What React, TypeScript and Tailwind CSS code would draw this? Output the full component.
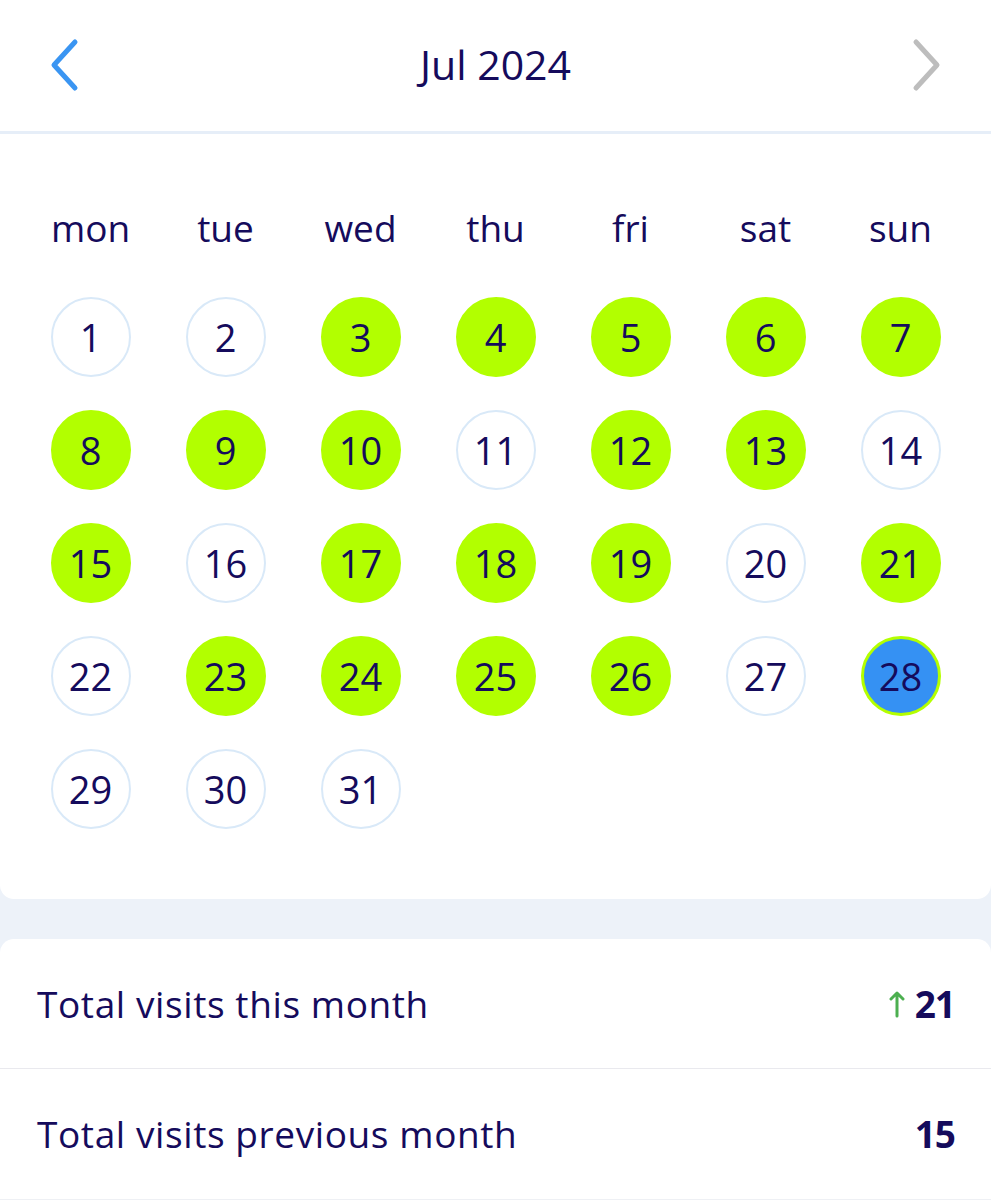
const WEEKDAYS = ["mon", "tue", "wed", "thu", "fri", "sat", "sun"];
const VISITED = new Set([3, 4, 5, 6, 7, 8, 9, 10, 12, 13, 15, 17, 18, 19, 21, 23, 24, 25, 26, 28]);
const TODAY = 28;

function Chevron({ dir, className }: { dir: "left" | "right"; className?: string }) {
  return (
    <svg width="32" height="54" viewBox="0 0 32 54" fill="none" className={className}>
      <path
        d={dir === "left" ? "M27 4 L6 27 L27 50" : "M5 4 L26 27 L5 50"}
        stroke="currentColor"
        strokeWidth="5"
        strokeLinecap="round"
        strokeLinejoin="round"
      />
    </svg>
  );
}

function UpArrow() {
  return (
    <svg width="16" height="28" viewBox="0 0 16 28" fill="none" className="text-[#4caf50]">
      <path d="M8 26 V3 M2 9 L8 3 L14 9" stroke="currentColor" strokeWidth="3" strokeLinecap="round" strokeLinejoin="round" />
    </svg>
  );
}

function Day({ n }: { n: number }) {
  const visited = VISITED.has(n);
  const today = n === TODAY;
  let cls = "border-2 border-[#d9e9f8] bg-white";
  if (today) cls = "border-[3px] border-[#b4ff00] bg-[#3591f3]";
  else if (visited) cls = "border-2 border-[#b2ff00] bg-[#b2ff00]";
  return (
    <div className="flex justify-center">
      <div className={`w-[80px] h-[80px] rounded-full flex items-center justify-center text-[38px] leading-none text-[#150b5c] ${cls}`}>
        {n}
      </div>
    </div>
  );
}

export default function App() {
  const days = Array.from({ length: 31 }, (_, i) => i + 1);
  return (
    <div className="min-h-[1200px] bg-[#edf2f9] text-[#150b5c]" style={{ fontFamily: "'Open Sans', Lato, sans-serif" }}>
      <header className="h-[134px] bg-white border-b-[3px] border-[#e6eef8] flex items-center justify-between px-[48px] pb-[2px]">
        <Chevron dir="left" className="text-[#3a95f2]" />
        <h1 className="text-[41px]">Jul 2024</h1>
        <Chevron dir="right" className="text-[#bdbdbd]" />
      </header>

      <section className="bg-white rounded-b-[14px] px-[23px] pt-[72px] pb-[70px]">
        <div className="grid grid-cols-7">
          {WEEKDAYS.map((d) => (
            <div key={d} className="text-center text-[37px] leading-[44px]">
              {d}
            </div>
          ))}
        </div>
        <div className="grid grid-cols-7 gap-y-[33px] mt-[47px]">
          {days.map((n) => (
            <Day key={n} n={n} />
          ))}
        </div>
      </section>

      <section className="mt-[40px] bg-white rounded-t-[14px]">
        <div className="h-[130px] flex items-center justify-between pl-[37px] pr-[36px] border-b border-[#e9e9ee]">
          <span className="text-[37px] tracking-[0.6px]">Total visits this month</span>
          <span className="flex items-center gap-[10px] text-[37px] font-bold tracking-[-1px]">
            <UpArrow />
            21
          </span>
        </div>
        <div className="h-[131px] flex items-center justify-between pl-[37px] pr-[36px] border-b border-[#eef0f4]">
          <span className="text-[37px] tracking-[0.6px]">Total visits previous month</span>
          <span className="text-[37px] font-bold tracking-[-1px]">15</span>
        </div>
      </section>
    </div>
  );
}
